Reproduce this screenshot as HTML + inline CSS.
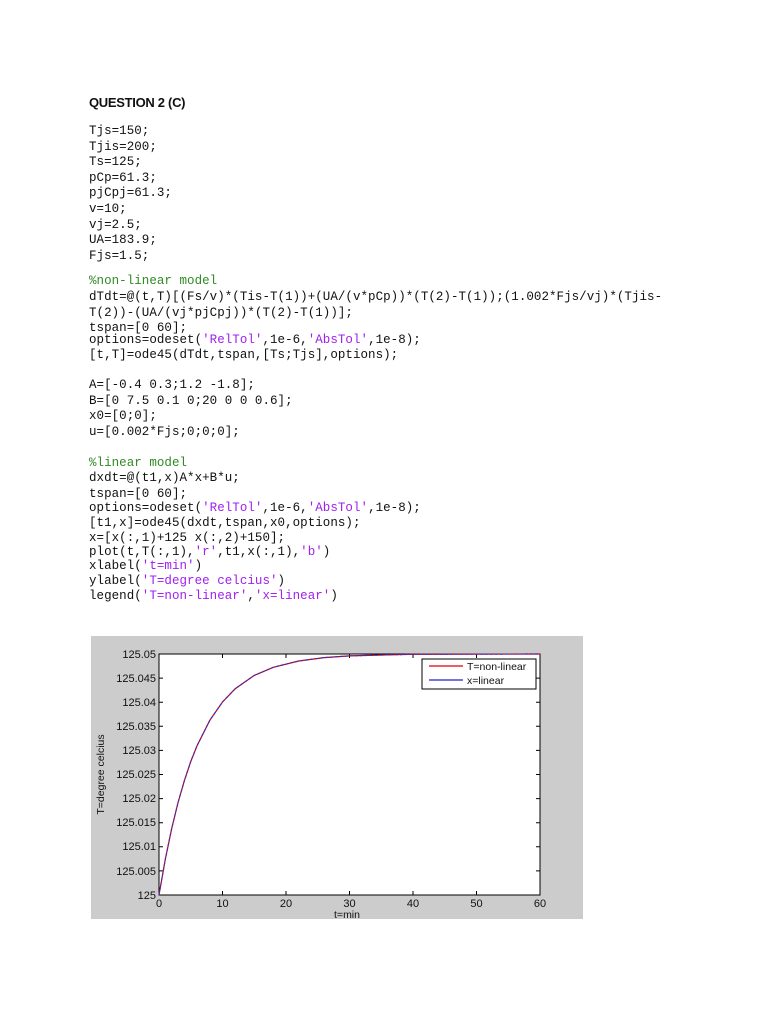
<!DOCTYPE html>
<html><head><meta charset="utf-8"><style>
body{margin:0;background:#fff;width:768px;height:1024px;position:relative;overflow:hidden}
.t{position:absolute;left:89px;font:bold 13px "Liberation Sans",sans-serif;color:#111;letter-spacing:-0.3px}
.c{position:absolute;left:89px;font:12.5px/16px "Liberation Mono",monospace;color:#111;white-space:pre;letter-spacing:0.04px}
.g{color:#2e8b22}.s{color:#a020f0}
</style></head><body>
<div class="t" style="top:95px">QUESTION 2 (C)</div>
<div class="c" style="top:123px">Tjs=150;</div>
<div class="c" style="top:139px">Tjis=200;</div>
<div class="c" style="top:154px">Ts=125;</div>
<div class="c" style="top:170px">pCp=61.3;</div>
<div class="c" style="top:185px">pjCpj=61.3;</div>
<div class="c" style="top:201px">v=10;</div>
<div class="c" style="top:217px">vj=2.5;</div>
<div class="c" style="top:232px">UA=183.9;</div>
<div class="c" style="top:248px">Fjs=1.5;</div>
<div class="c g" style="top:273px">%non-linear model</div>
<div class="c" style="top:289px">dTdt=@(t,T)[(Fs/v)*(Tis-T(1))+(UA/(v*pCp))*(T(2)-T(1));(1.002*Fjs/vj)*(Tjis-</div>
<div class="c" style="top:305px">T(2))-(UA/(vj*pjCpj))*(T(2)-T(1))];</div>
<div class="c" style="top:320px">tspan=[0 60];</div>
<div class="c" style="top:332px">options=odeset(<span class="s">'RelTol'</span>,1e-6,<span class="s">'AbsTol'</span>,1e-8);</div>
<div class="c" style="top:347px">[t,T]=ode45(dTdt,tspan,[Ts;Tjs],options);</div>
<div class="c" style="top:377px">A=[-0.4 0.3;1.2 -1.8];</div>
<div class="c" style="top:393px">B=[0 7.5 0.1 0;20 0 0 0.6];</div>
<div class="c" style="top:408px">x0=[0;0];</div>
<div class="c" style="top:424px">u=[0.002*Fjs;0;0;0];</div>
<div class="c g" style="top:455px">%linear model</div>
<div class="c" style="top:470px">dxdt=@(t1,x)A*x+B*u;</div>
<div class="c" style="top:486px">tspan=[0 60];</div>
<div class="c" style="top:500px">options=odeset(<span class="s">'RelTol'</span>,1e-6,<span class="s">'AbsTol'</span>,1e-8);</div>
<div class="c" style="top:515px">[t1,x]=ode45(dxdt,tspan,x0,options);</div>
<div class="c" style="top:530px">x=[x(:,1)+125 x(:,2)+150];</div>
<div class="c" style="top:544px">plot(t,T(:,1),<span class="s">'r'</span>,t1,x(:,1),<span class="s">'b'</span>)</div>
<div class="c" style="top:558px">xlabel(<span class="s">'t=min'</span>)</div>
<div class="c" style="top:573px">ylabel(<span class="s">'T=degree celcius'</span>)</div>
<div class="c" style="top:588px">legend(<span class="s">'T=non-linear'</span>,<span class="s">'x=linear'</span>)</div>
<svg style="position:absolute;left:0;top:0" width="768" height="1024" font-family="Liberation Sans,sans-serif" font-size="11">
<rect x="91" y="636" width="492" height="283" fill="#cccccc"/>
<rect x="159" y="654" width="381" height="241" fill="#fff" stroke="#000" stroke-width="1"/>
<g stroke="#000">
<path d="M159 678.1h4M159 702.2h4M159 726.3h4M159 750.4h4M159 774.5h4M159 798.6h4M159 822.7h4M159 846.8h4M159 870.9h4M540 678.1h-4M540 702.2h-4M540 726.3h-4M540 750.4h-4M540 774.5h-4M540 798.6h-4M540 822.7h-4M540 846.8h-4M540 870.9h-4"/>
<path d="M222.5 895v-4M286 895v-4M349.5 895v-4M413 895v-4M476.5 895v-4M222.5 654v4M286 654v4M349.5 654v4M413 654v4M476.5 654v4"/>
</g>
<g text-anchor="end" fill="#111">
<text x="156" y="658">125.05</text><text x="156" y="682">125.045</text><text x="156" y="706">125.04</text><text x="156" y="730">125.035</text><text x="156" y="754">125.03</text><text x="156" y="778">125.025</text><text x="156" y="802">125.02</text><text x="156" y="826">125.015</text><text x="156" y="850">125.01</text><text x="156" y="875">125.005</text><text x="156" y="899">125</text>
</g>
<g text-anchor="middle" fill="#111">
<text x="159" y="907">0</text><text x="222.5" y="907">10</text><text x="286" y="907">20</text><text x="349.5" y="907">30</text><text x="413" y="907">40</text><text x="476.5" y="907">50</text><text x="540" y="907">60</text>
<text x="347" y="918" font-size="10.5">t=min</text>
<text transform="translate(104,774.5) rotate(-90)" font-size="10.5">T=degree celcius</text>
</g>
<path d="M159 895L165.35 859L171.7 828.5L178.05 802.5L184.4 780.6L190.75 761.5L197.1 745.6L209.8 720.3L222.5 702L235.2 688.7L254.25 675.4L273.3 667.3L298.7 661L324.1 657.6L349.5 655.9L381.25 655L413 654.3L540 654" fill="none" stroke="#c00" stroke-width="1.2"/>
<path d="M159 895L165.35 859L171.7 828.5L178.05 802.5L184.4 780.6L190.75 761.5L197.1 745.6L209.8 720.3L222.5 702L235.2 688.7L254.25 675.4L273.3 667.3L298.7 661L324.1 657.6L349.5 655.9L381.25 655L413 654.3L540 654" fill="none" stroke="#33c" stroke-width="1.2" stroke-dasharray="3 2"/>
<rect x="422" y="659" width="114" height="30" fill="#fff" stroke="#000"/>
<line x1="429" y1="666" x2="463" y2="666" stroke="#d00" stroke-width="1.2"/>
<line x1="429" y1="680" x2="463" y2="680" stroke="#22c" stroke-width="1.2"/>
<text x="467" y="670" fill="#111" font-size="10.5">T=non-linear</text>
<text x="467" y="684" fill="#111" font-size="10.5">x=linear</text>
</svg>
</body></html>
